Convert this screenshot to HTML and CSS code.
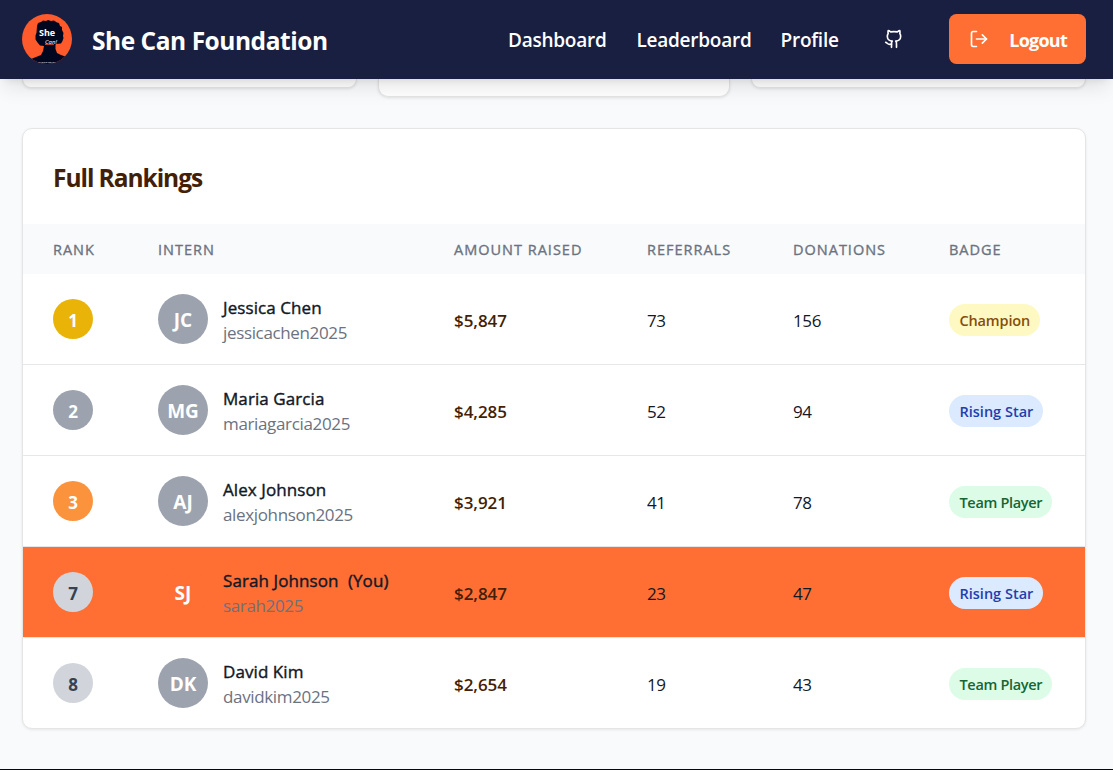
FILE: index.html
```html
<!DOCTYPE html>
<html lang="en">
<head>
<meta charset="utf-8">
<title>She Can Foundation</title>
<link rel="stylesheet" href="styles.css">
</head>
<body>
<header class="navbar">
  <a class="brand">
    <svg class="logo" viewBox="0 0 50 50">
      <defs><clipPath id="disc"><circle cx="25" cy="25" r="25"/></clipPath></defs>
      <g clip-path="url(#disc)">
        <rect width="50" height="50" fill="#ff5a2b"/>
        <path fill="#020720" d="M15 12l1-3 3-1 2-1.500 3 .5 2-1 3 1 3-.5 3 2 2 .5 1 3 2 1 0 3 1.500 3-.5 3 .5 2-1 3-1.500 2.500-5 .5-.5 1 0 4 1.500 4 4 2 9 3v11H4v-8l10-4 5-2 2-4 1-5-4-.5-2.500-3-2-3 0-4 1-3z"/>
        <path d="M23 30.500h9" stroke="#ff5a2b" stroke-width=".7"/>
        <path d="M16 48.500h18" stroke="#b8bac6" stroke-width=".7" stroke-dasharray="2 .4 1 .3"/>
      </g>
      <text class="logo-she" x="17" y="22">She</text>
      <text class="logo-can" x="23" y="29.500">Can!</text>
    </svg>
    <span class="brand-name">She Can Foundation</span>
  </a>
  <nav class="nav">
    <a class="link link-dashboard">Dashboard</a>
    <a class="link link-leaderboard">Leaderboard</a>
    <a class="link link-profile">Profile</a>
    <svg class="icon github" viewBox="0 0 24 24"><path d="M15 22v-4a4.800 4.800 0 0 0-1-3.500c3 0 6-2 6-5.500.08-1.250-.27-2.480-1-3.500.28-1.150.28-2.350 0-3.500 0 0-1 0-3 1.500-2.640-.5-5.360-.5-8 0C6 2 5 2 5 2c-.3 1.150-.3 2.350 0 3.500A5.403 5.403 0 0 0 4 9c0 3.500 3 5.500 6 5.500-.39.490-.68 1.050-.85 1.650-.17.600-.22 1.230-.15 1.850v4"/><path d="M9 18c-4.510 2-5-2-7-2"/></svg>
    <button class="logout"><svg class="icon" viewBox="0 0 24 24"><path d="M9 21H5a2 2 0 0 1-2-2V5a2 2 0 0 1 2-2h4"/><path d="m16 17 5-5-5-5"/><path d="M21 12H9"/></svg><span>Logout</span></button>
  </nav>
</header>
<main class="page">
  <section class="podium"><div class="place side-left"></div><div class="place center"></div><div class="place side-right"></div></section>
  <section class="rankings">
    <div class="title"><h2>Full Rankings</h2></div>
    <div class="row head"><span>RANK</span><span>INTERN</span><span>AMOUNT RAISED</span><span>REFERRALS</span><span>DONATIONS</span><span>BADGE</span></div>
    <div class="row">
      <div><b class="rank gold">1</b></div>
      <div class="intern"><b class="avatar">JC</b><div class="who"><p class="name">Jessica Chen</p><p class="user">jessicachen2025</p></div></div>
      <div class="amount">$5,847</div><div class="num">73</div><div class="num">156</div><div class="badge-cell"><span class="badge champion">Champion</span></div>
    </div>
    <div class="row">
      <div><b class="rank silver">2</b></div>
      <div class="intern"><b class="avatar">MG</b><div class="who"><p class="name">Maria Garcia</p><p class="user">mariagarcia2025</p></div></div>
      <div class="amount">$4,285</div><div class="num">52</div><div class="num">94</div><div class="badge-cell"><span class="badge rising">Rising Star</span></div>
    </div>
    <div class="row">
      <div><b class="rank bronze">3</b></div>
      <div class="intern"><b class="avatar">AJ</b><div class="who"><p class="name">Alex Johnson</p><p class="user">alexjohnson2025</p></div></div>
      <div class="amount">$3,921</div><div class="num">41</div><div class="num">78</div><div class="badge-cell"><span class="badge team">Team Player</span></div>
    </div>
    <div class="row you">
      <div><b class="rank">7</b></div>
      <div class="intern"><b class="avatar">SJ</b><div class="who"><p class="name">Sarah Johnson <span class="you-tag">(You)</span></p><p class="user">sarah2025</p></div></div>
      <div class="amount">$2,847</div><div class="num">23</div><div class="num">47</div><div class="badge-cell"><span class="badge rising">Rising Star</span></div>
    </div>
    <div class="row">
      <div><b class="rank">8</b></div>
      <div class="intern"><b class="avatar">DK</b><div class="who"><p class="name">David Kim</p><p class="user">davidkim2025</p></div></div>
      <div class="amount">$2,654</div><div class="num">19</div><div class="num">43</div><div class="badge-cell"><span class="badge team">Team Player</span></div>
    </div>
  </section>
</main>
<footer class="footer"></footer>
</body>
</html>
```
FILE: styles.css
```css
* { box-sizing: border-box; }
body {
  margin: 0;
  height: 770px;
  overflow: hidden;
  display: flex;
  flex-direction: column;
  background: #f9fafb;
  color: #111827;
  font-family: "Open Sans", "Noto Sans", sans-serif;
}
h2, p { margin: 0; }

.navbar {
  position: relative;
  z-index: 2;
  flex: none;
  height: 79px;
  padding: 0 27px 1px 22px;
  display: flex;
  align-items: center;
  justify-content: space-between;
  background: #191f40;
  color: #fff;
  box-shadow: 0 12px 19px -4px rgba(0,0,0,.1), 0 5px 8px -5px rgba(0,0,0,.1);
}
.brand { display: flex; align-items: center; gap: 20px; }
.logo { width: 50px; height: 50px; }
.logo-she { font: 700 9px "Open Sans", sans-serif; fill: #fff; }
.logo-can { font: italic 6px "Open Sans", sans-serif; fill: #fff; }
.brand-name { font-size: 24.5px; font-weight: 700; letter-spacing: -.46px; line-height: 34px; padding-top: 3px; }
.nav { display: flex; align-items: center; }
.link { font-size: 19px; font-weight: 600; letter-spacing: -.25px; padding-top: 2px; white-space: nowrap; }
.link-dashboard { width: 128.500px; }
.link-leaderboard { width: 144px; }
.link-profile { width: 103.500px; }
.icon { width: 20px; height: 20px; fill: none; stroke: currentColor; stroke-width: 2; stroke-linecap: round; stroke-linejoin: round; }
.github { margin-right: 45px; }
.logout {
  width: 137px;
  height: 50px;
  padding: 0 19px 0 20px;
  display: flex;
  align-items: center;
  justify-content: space-between;
  border: 0;
  border-radius: 7.500px;
  background: #ff6e33;
  color: #fff;
  font: 700 18px "Open Sans", sans-serif;
  letter-spacing: -.75px;
}
.logout span { padding-top: 2px; }

.page { flex: none; width: 1064px; margin-left: 22px; }
.podium { display: grid; grid-template-columns: 335px 352px 335px; gap: 21px; height: 49px; align-items: start; }
.place { height: 9px; background: #fff; border: 1px solid #e5e5e5; border-top: 0; border-radius: 0 0 10px 10px; box-shadow: 0 1px 3px rgba(0,0,0,.1); }
.center { height: 18px; }

.rankings {
  height: 601px;
  overflow: hidden;
  background: #fff;
  border: 1px solid #e5e5e5;
  border-radius: 10px;
  box-shadow: 0 1px 3px rgba(0,0,0,.08);
}
.title { height: 95px; padding: 31px 30px; }
.title h2 { color: #431f07; font-size: 24.500px; line-height: 36px; font-weight: 700; letter-spacing: -1.050px; }
.row {
  display: grid;
  grid-template-columns: 105px 296px 193px 146px 156px 166px;
  height: 91px;
  align-items: center;
  border-bottom: 1px solid #e5e7eb;
}
.row > * { padding-left: 30px; white-space: nowrap; }
.row:last-child { border-bottom: 0; height: 90px; }
.head { height: 50px; border: 0; background: #f9fafb; color: #6b7280; font-size: 14.500px; letter-spacing: 1px; -webkit-text-stroke: .35px currentColor; }
.intern { display: flex; align-items: center; gap: 15px; }
.who { padding-top: 1px; }
.rank, .avatar { display: flex; align-items: center; justify-content: center; border-radius: 50%; font-weight: 700; }
.rank { width: 40px; height: 40px; padding-top: 3px; font-size: 17px; background: #d1d5db; color: #374151; }
.gold { background: #eab308; color: #fff; }
.silver { background: #9ca3af; color: #fff; }
.bronze { background: #fb923c; color: #fff; }
.avatar { width: 50px; height: 50px; padding-top: 2px; font-size: 19px; background: #9ca3af; color: #fff; }
.name, .user { font-size: 17px; line-height: 25px; }
.name { letter-spacing: .08px; -webkit-text-stroke: .4px currentColor; }
.you-tag { margin-left: 5px; }
.user { color: #6b7280; letter-spacing: -.35px; }
.amount { color: #431f07; font-size: 17px; font-weight: 600; letter-spacing: -.05px; padding-top: 2px; }
.num { font-size: 17px; letter-spacing: -.4px; padding-top: 2px; }
.badge-cell { padding-top: 1px; }
.badge { display: inline-flex; align-items: center; height: 32px; padding: 1px 10px 0 10.500px; border-radius: 16px; font-size: 14.500px; font-weight: 600; letter-spacing: -.15px; vertical-align: middle; }
.champion { background: #fef9c3; color: #854d0e; }
.rising { background: #dbeafe; color: #1e40af; letter-spacing: 0; }
.team { background: #dcfce7; color: #166534; letter-spacing: -.32px; }
.you { background: #ff6e33; }
.you .avatar { background: #ff6e33; }
.footer { flex: none; height: 1px; margin-top: 40px; background: #050814; }
```
